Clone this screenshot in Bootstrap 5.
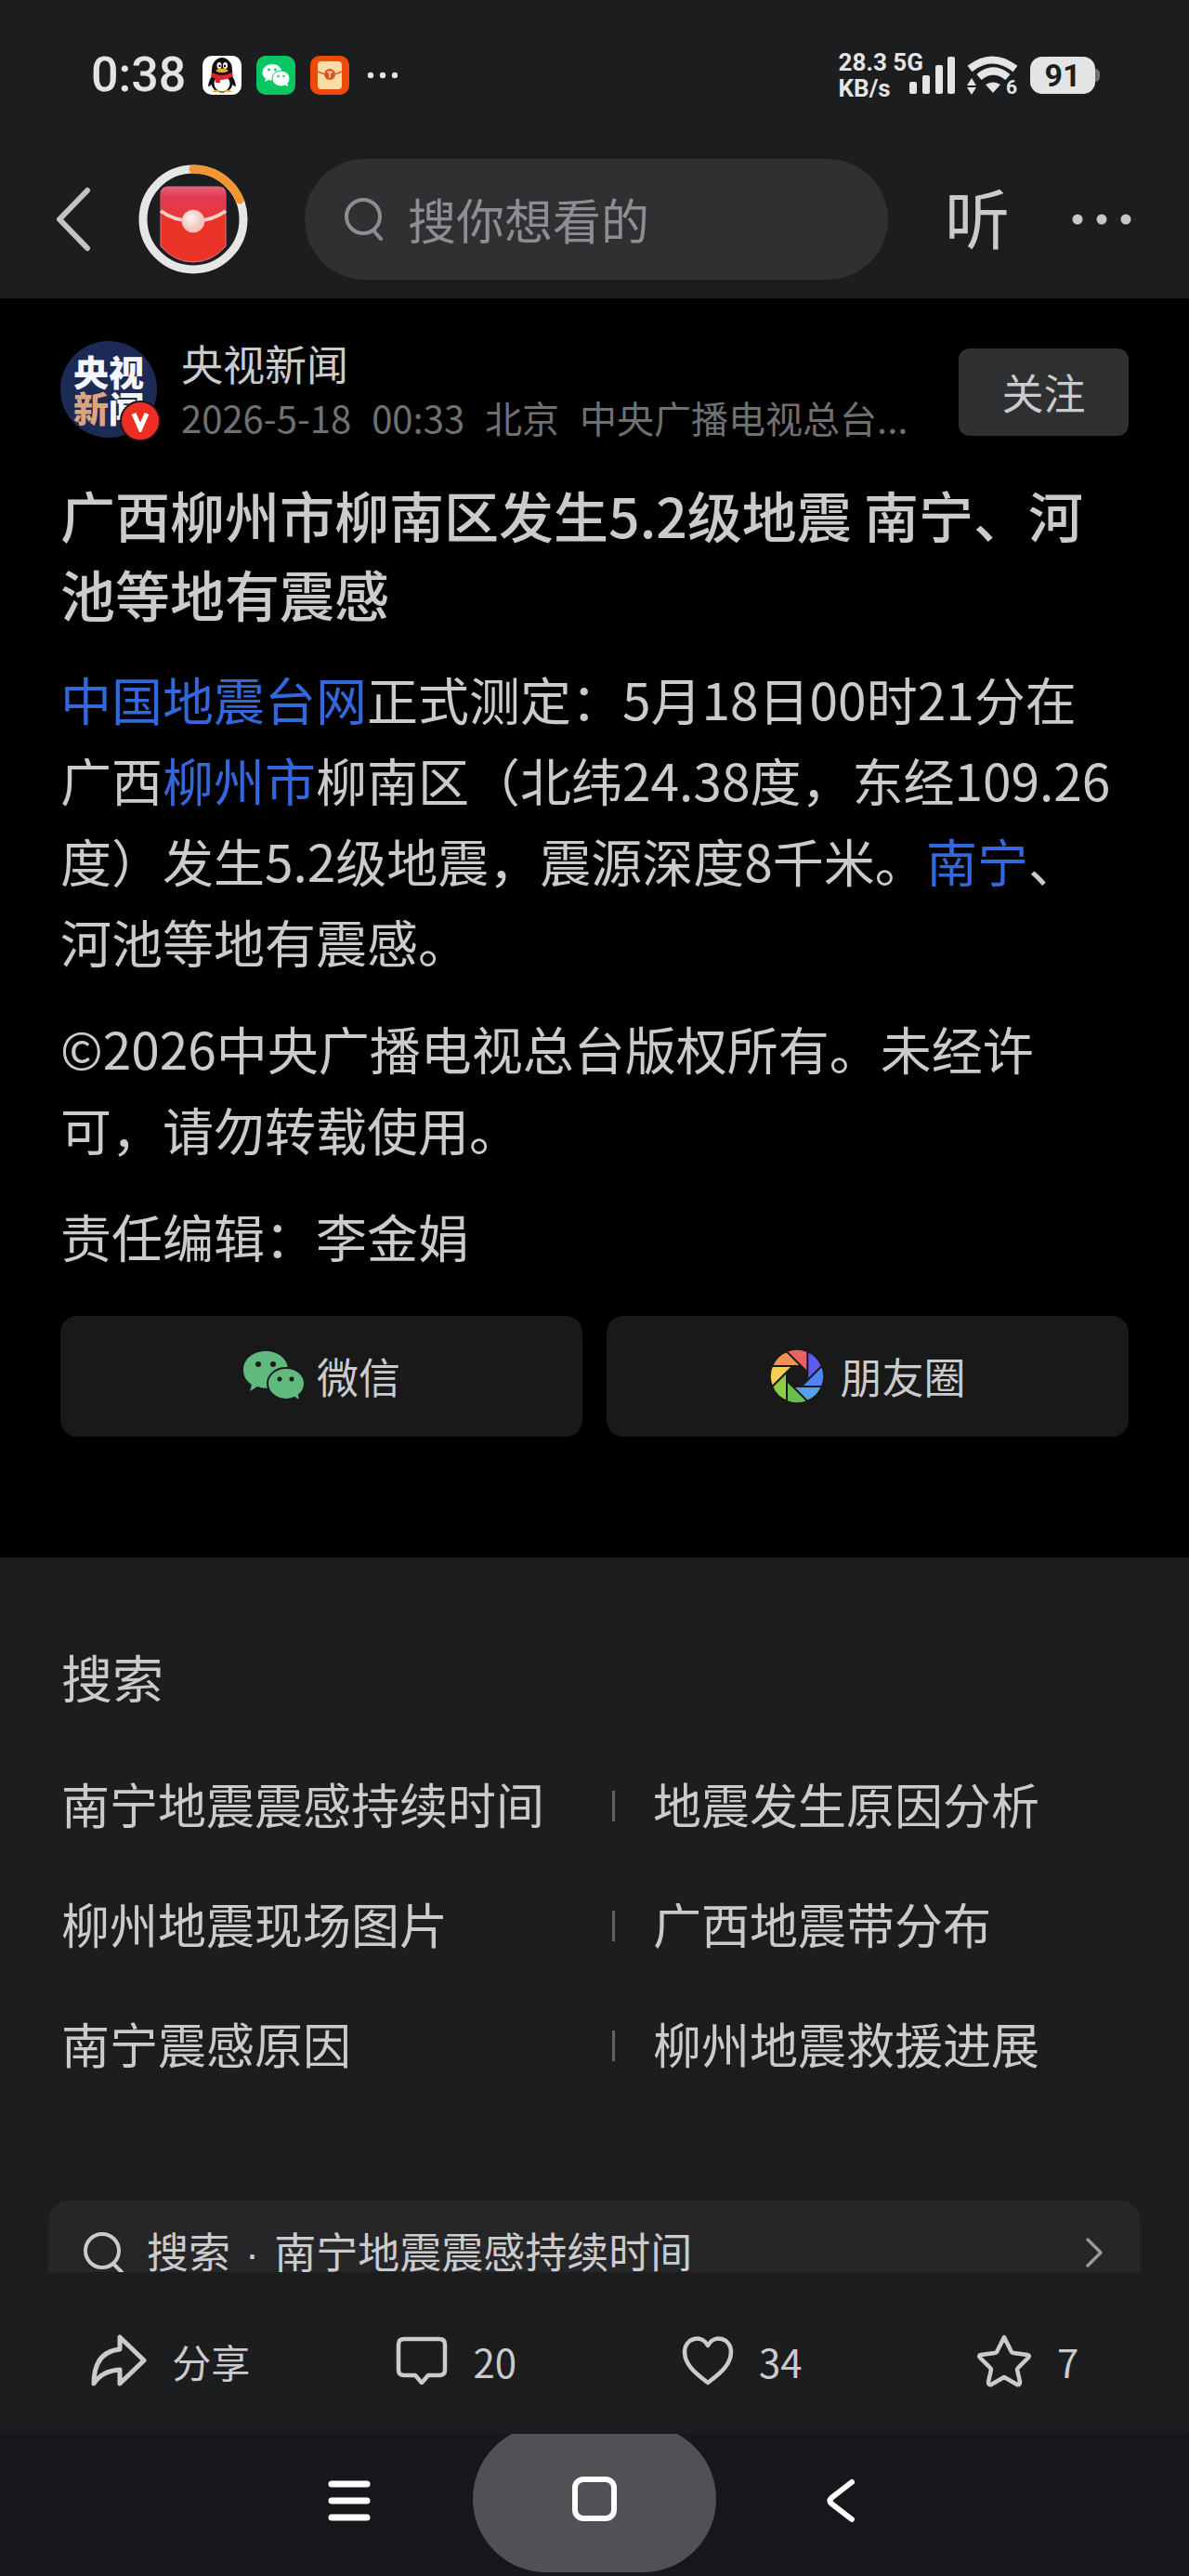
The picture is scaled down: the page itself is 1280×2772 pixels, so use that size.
<!DOCTYPE html>
<html lang="zh-CN">
<head>
<meta charset="utf-8">
<meta name="viewport" content="width=device-width, initial-scale=1">
<title>广西柳州市柳南区发生5.2级地震 南宁、河池等地有震感</title>
<link href="https://cdn.jsdelivr.net/npm/bootstrap@5.3.0/dist/css/bootstrap.min.css" rel="stylesheet">
<style>
:root{--ink:#cbcbcd;--panel:#1c1d1f;--raised:#2f3032;}
body{font-family:"Noto Sans CJK SC",sans-serif;color:var(--ink);background:var(--panel);height:100vh;line-height:1.5}
button{font-family:inherit;color:inherit}
svg{display:block;flex:none}
.bare{background:none;border:0;padding:0;color:inherit}
.statusbar{height:162px;padding:0 96px 0 98px;font-family:Roboto,sans-serif;font-weight:700;color:#e3e4e4}
.clock{font-size:52px;font-weight:500;width:120px}
.netrate{font-size:26px;line-height:28px}
.bars{margin-left:-15px}
.wifi{margin:0 13px 0 11px}
.batt{width:70px;height:40px;border-radius:13px;background:#e3e5e4;color:#1c1d1f;font-size:34px}
.batt-tip{width:5px;height:14px;background:#707172;border-radius:0 5px 5px 0}
.topnav{padding:9px 62px 20px 60px}
.packet{margin-left:51px}
.finder{height:130px;border-radius:65px;background:var(--raised);margin-left:61px;padding:0 43px;flex:1 1 0;min-width:0}
.finder input{font-size:52px;color:var(--ink);background:none;border:0;outline:0;min-width:0;padding:0}
.finder input::placeholder{color:#8d8e91;opacity:1}
.listen{font-size:70px;line-height:100px;margin:0 67px 0 61px;padding-bottom:6px}
.feed{min-height:0}
.article{background:#000;padding:46px 65px 130px}
.avatar{width:104px;height:104px;background:#1e2a56;font-size:38px;font-weight:900;line-height:39px;color:#f4f6fc;padding-top:12px}
.avatar em{font-style:normal;color:#d9a77f}
.vmark{right:-4px;bottom:-4px;width:44px;height:44px;border:2px solid #241216;background:#ee2d24}
.byline{margin-left:26px}
.author{font-size:45px;line-height:48px}
.meta{font-size:40px;line-height:56px;color:#6f7072;gap:22px;margin-top:6px}
.btn.follow{width:183px;height:94px;border-radius:12px;border:0;background:var(--raised);color:var(--ink);font-size:45px;line-height:60px}
.headline{font-size:59px;line-height:85px;font-weight:500;margin:34px 0 27px}
.story{font-size:55px;line-height:87px;padding-right:10px}
.story p{margin-bottom:28px}
.story a{color:#3268dc;text-decoration:none}
.sharebtn{height:130px;border-radius:18px;background:#19191a;font-size:45px;gap:12px}
.sharerow{margin-top:43px;gap:26px}
.related{padding:87px 52px 0}
.related h2{font-size:55px;line-height:80px;font-weight:400;margin:0 14px 33px}
.related ul{margin:0 14px 105px}
.related li{font-size:52px;line-height:129px}
.related li a{color:inherit;text-decoration:none}
.related li:nth-child(even) a::before{content:"";display:inline-block;width:3px;height:33px;background:#626365;margin:0 41px 0 19px;vertical-align:3px}
.more{height:120px;border-radius:22px;background:#262628;font-size:45px;padding:0 40px 8px 38px;color:inherit;text-decoration:none}
.more .dot{font-family:"Liberation Sans",sans-serif;margin:0 6px}
.actions{height:174px;padding:16px 20px 0 30px;background:var(--panel);font-size:42px}
.actions button{gap:27px}
.sysnav{height:153px;background:#16171b}
.sysnav .homekey{width:262px;height:158px;border-radius:79px;background:#505154;margin-bottom:4px}
.keys{gap:110px}
</style>
<script src="https://cdn.jsdelivr.net/npm/bootstrap@5.3.0/dist/js/bootstrap.bundle.min.js"></script>
</head>
<body class="d-flex flex-column overflow-hidden">
<header class="flex-shrink-0">
  <div class="statusbar d-flex align-items-center">
    <span class="clock">0:38</span>
    <div class="d-flex align-items-center gap-3">
      <svg width="42" height="42" viewBox="0 0 42 42"><rect width="42" height="42" rx="10" fill="#fff"/><path d="M11 21Q7 25 6 33q3 0 5-5zM31 21q4 4 5 12-3 0-5-5z" fill="#111"/><ellipse cx="21" cy="28" rx="12" ry="11.500" fill="#111"/><ellipse cx="21" cy="30" rx="8.500" ry="8.500" fill="#fff"/><path d="M10 15a11 13 0 0 1 22 0q1 6-2 8H12q-3-2-2-8" fill="#111"/><ellipse cx="18" cy="10.500" rx="2.500" ry="3.500" fill="#fff"/><ellipse cx="24.500" cy="10.500" rx="2.500" ry="3.500" fill="#fff"/><circle cx="18.500" cy="11" r="1.200"/><circle cx="24" cy="11" r="1.200"/><ellipse cx="21" cy="16" rx="6.500" ry="2.200" fill="#f3ac27"/><path d="M10 18q11 6 22 0l1 4q-7 4-14 4v3h-5v-4l-5-3z" fill="#e0222a"/><path d="M11 38q4-3 9 1H11zM22 39q5-4 9-1v1z" fill="#f3ac27"/></svg>
      <svg width="42" height="42" viewBox="0 0 42 42"><rect width="42" height="42" rx="10" fill="#09c664"/><path d="M17 9c-6 0-10.500 4-10.500 9 0 3 1.500 5 3.500 6.500L9 28l4-2q7 1.500 11-1.500 4-3 3.500-7Q26 9 17 9" fill="#fff"/><ellipse cx="26.500" cy="24.500" rx="9.500" ry="8.500" fill="#fff" stroke="#09c664" stroke-width="1"/><path d="m30 31 4 2-1-4z" fill="#fff"/><g fill="#09c664"><circle cx="13.500" cy="15" r="1.400"/><circle cx="20.500" cy="15" r="1.400"/><circle cx="23.500" cy="22" r="1.200"/><circle cx="29.500" cy="22" r="1.200"/></g></svg>
      <svg width="42" height="42" viewBox="0 0 42 42"><rect width="42" height="42" rx="10" fill="#f04a0b"/><rect x="8" y="6" width="26" height="30" rx="4" fill="#fbdca8"/><path d="M8 17q13 7 26 0" fill="none" stroke="#d8642c" stroke-width="1.500"/><circle cx="21" cy="20" r="6" fill="#d9551d"/><path d="M18 17.500h6M21 17.500v6" stroke="#fde4bd" stroke-width="1.500"/></svg>
      <svg width="36" height="8" viewBox="0 0 36 8" fill="#e3e4e4"><circle cx="7" cy="4" r="3.200"/><circle cx="20" cy="4" r="3.200"/><circle cx="33" cy="4" r="3.200"/></svg>
    </div>
    <div class="netrate ms-auto">28.3 5G<br>KB/s</div>
    <svg class="bars" width="50" height="40" viewBox="0 0 50 40" fill="#e3e4e4"><rect y="27" width="8" height="13" rx="2"/><rect x="14" y="20" width="8" height="20" rx="2"/><rect x="28" y="9" width="8" height="31" rx="2"/><rect x="41" width="8" height="40" rx="2"/></svg>
    <svg class="wifi" width="56" height="42" viewBox="0 0 56 42"><g fill="none" stroke="#e3e4e4" stroke-width="8"><path d="M4 14q24-19 49 0"/><path d="M14 23q15-13 31 0"/></g><path d="M21 31q8-5 16 0l-8 9z" fill="#e3e4e4"/><path d="m6 24 5 8H1zM6 42l5-8H1z" fill="#e3e4e4"/><text x="43" y="41" font-size="21" fill="#e3e4e4">6</text></svg>
    <span class="batt d-flex align-items-center justify-content-center">91</span><span class="batt-tip"></span>
  </div>
  <nav class="topnav d-flex align-items-center">
    <button class="bare" aria-label="返回"><svg width="38" height="70" viewBox="0 0 38 70"><path d="M34 4 4 35l30 31" fill="none" stroke="#c2c3c4" stroke-width="6" stroke-linecap="round" stroke-linejoin="round"/></svg></button>
    <button class="bare packet" aria-label="红包"><svg width="118" height="118" viewBox="0 0 118 118">
      <defs><linearGradient id="flap" x1="0" y1="0" x2="0" y2="1"><stop offset="0" stop-color="#e4647a"/><stop offset=".3" stop-color="#e33b52"/><stop offset="1" stop-color="#e8373c"/></linearGradient><radialGradient id="pearl" cx=".4" cy=".35"><stop offset="0" stop-color="#fff3ef"/><stop offset="1" stop-color="#f4c6bf"/></radialGradient></defs>
      <circle cx="59" cy="59" r="54" fill="none" stroke="#e6e6e6" stroke-width="9"/><path d="M59 5a54 54 0 0 1 50 33" fill="none" stroke="#f3962f" stroke-width="9" stroke-linecap="round"/>
      <path d="M24 32q0-8 8-8h54q8 0 8 8v56q-15 17-35 17T24 88z" fill="#e93427" stroke="#df7590" stroke-width="1"/><path d="M24 49V32q0-8 8-8h54q8 0 8 8v17q-14 11-35 11T24 49" fill="url(#flap)"/><path d="M24 50q15 11 35 11t35-11" fill="none" stroke="#f8d2cb" stroke-width="4"/><circle cx="59" cy="61" r="12" fill="url(#pearl)" stroke="#f5b6ad" stroke-width="1"/></svg></button>
    <label class="finder d-flex align-items-center">
      <svg class="me-4" width="44" height="48" viewBox="0 0 44 48" fill="none" stroke="#8d8e91" stroke-width="4"><circle cx="20" cy="21" r="18"/><path d="m31 36 8 9" stroke-linecap="round"/></svg>
      <input class="w-100" type="search" placeholder="搜你想看的" aria-label="搜索">
    </label>
    <button class="bare listen">听</button>
    <button class="bare" aria-label="更多"><svg width="64" height="12" viewBox="0 0 64 12" fill="#c6c7c8"><circle cx="6" cy="6" r="5.500"/><circle cx="32" cy="6" r="5.500"/><circle cx="58" cy="6" r="5.500"/></svg></button>
  </nav>
</header>

<main class="feed flex-fill overflow-hidden">
  <article class="article">
    <div class="d-flex align-items-start">
      <div class="avatar rounded-circle position-relative text-center flex-shrink-0">央视<br><em>新</em>闻
        <span class="vmark position-absolute rounded-circle d-flex align-items-center justify-content-center"><svg width="22" height="24" viewBox="0 0 22 24"><path d="m4 4 7 16 7-16" fill="none" stroke="#fff" stroke-width="5"/></svg></span>
      </div>
      <div class="byline flex-fill">
        <div class="author">央视新闻</div>
        <div class="meta d-flex text-nowrap"><time>2026-5-18</time><span>00:33</span><span>北京</span><span>中央广播电视总台...</span></div>
      </div>
      <button class="btn follow p-0 mt-2 flex-shrink-0">关注</button>
    </div>
    <h1 class="headline">广西柳州市柳南区发生5.2级地震 南宁、河池等地有震感</h1>
    <div class="story">
      <p><a href="#">中国地震台网</a>正式测定：5月18日00时21分在广西<a href="#">柳州市</a>柳南区（北纬24.38度，东经109.26度）发生5.2级地震，震源深度8千米。<a href="#">南宁</a>、河池等地有震感。</p>
      <p>©2026中央广播电视总台版权所有。未经许可，请勿转载使用。</p>
      <p class="mb-0">责任编辑：李金娟</p>
    </div>
    <div class="sharerow d-flex">
      <button class="bare sharebtn flex-fill w-50 d-flex align-items-center justify-content-center">
        <svg width="68" height="56" viewBox="0 0 68 56"><path d="M25 1C11 1 1 10 1 21c0 7 3 12 9 16l-2 7 8-5q5 2 11 2C40 41 49 33 49 21S38 1 25 1" fill="#60ba7d"/><path d="M47 19c-12 0-20 8-20 17s9 17 20 17q5 0 9-2l6 4-1-7q6-5 6-12c0-9-8-17-20-17" fill="#60ba7d" stroke="#19191a" stroke-width="2"/><g fill="#19191a"><circle cx="17" cy="15" r="3"/><circle cx="33" cy="15" r="3"/><circle cx="40" cy="31" r="2.500"/><circle cx="53" cy="31" r="2.500"/></g></svg>微信</button>
      <button class="bare sharebtn flex-fill w-50 d-flex align-items-center justify-content-center">
        <svg width="60" height="60" viewBox="-30 -30 60 60"><defs><path id="blade" d="M11-27A29 29 0 0 1 27-11L11 5z"/></defs><g stroke="#19191a" stroke-width="2"><use href="#blade" fill="#5f5af0"/><use href="#blade" fill="#4c86f2" transform="rotate(45)"/><use href="#blade" fill="#58a0ee" transform="rotate(90)"/><use href="#blade" fill="#69be4d" transform="rotate(135)"/><use href="#blade" fill="#91cb43" transform="rotate(180)"/><use href="#blade" fill="#f6cd55" transform="rotate(225)"/><use href="#blade" fill="#ef9254" transform="rotate(270)"/><use href="#blade" fill="#e9625f" transform="rotate(315)"/></g></svg><span class="ms-1">朋友圈</span></button>
    </div>
  </article>

  <section class="related">
    <h2>搜索</h2>
    <ul class="list-unstyled row gx-0">
      <li class="col-6"><a href="#">南宁地震震感持续时间</a></li><li class="col-6"><a href="#">地震发生原因分析</a></li>
      <li class="col-6"><a href="#">柳州地震现场图片</a></li><li class="col-6"><a href="#">广西地震带分布</a></li>
      <li class="col-6"><a href="#">南宁震感原因</a></li><li class="col-6"><a href="#">柳州地震救援进展</a></li>
    </ul>
    <a class="more d-flex align-items-center" href="#">
      <svg class="me-4" width="44" height="46" viewBox="0 0 44 46" fill="none" stroke="#cbcbcd" stroke-width="4"><circle cx="20" cy="21" r="18"/><path d="m32 35 9 9" stroke-linecap="round"/></svg>
      <span>搜索 <span class="dot">·</span> 南宁地震震感持续时间</span>
      <svg class="ms-auto" width="20" height="34" viewBox="0 0 20 34"><path d="m3 3 14 14L3 31" fill="none" stroke="#98999b" stroke-width="3.500" stroke-linecap="round" stroke-linejoin="round"/></svg>
    </a>
  </section>
</main>

<footer class="flex-shrink-0">
  <div class="actions d-flex">
    <button class="bare w-25 d-flex align-items-center justify-content-center"><svg width="60" height="56" viewBox="0 0 60 56"><path d="M31 3v13Q3 19 3 53q9-14 28-15v15l26-25z" fill="none" stroke="#cbcbcd" stroke-width="5" stroke-linejoin="round"/></svg>分享</button>
    <button class="bare w-25 d-flex align-items-center justify-content-center"><svg width="56" height="52" viewBox="0 0 56 52"><path d="M9 3h38q6 0 6 6v27q0 6-6 6H35l-7 8-7-8H9q-6 0-6-6V9q0-6 6-6z" fill="none" stroke="#cbcbcd" stroke-width="4.500" stroke-linejoin="round"/></svg>20</button>
    <button class="bare w-25 d-flex align-items-center justify-content-center"><svg width="56" height="54" viewBox="0 0 56 54"><path d="M28 51C18 43 3 33 3 18 3 3 21-2 28 11 35-2 53 3 53 18c0 15-15 25-25 33z" fill="none" stroke="#cbcbcd" stroke-width="4.500" stroke-linejoin="round"/></svg>34</button>
    <button class="bare w-25 d-flex align-items-center justify-content-center"><svg width="60" height="58" viewBox="0 0 60 58"><path d="m30 4 8 16q1 1 2 1l15 2q3 1 1 3L45 37q-1 1-1 2l3 13q0 4-3 3L30 47l-14 8q-3 1-3-3l3-13q0-1-1-2L4 26q-2-2 1-3l15-2q1 0 2-1l8-16z" fill="none" stroke="#cbcbcd" stroke-width="4.500" stroke-linejoin="round"/></svg>7</button>
  </div>
  <div class="sysnav overflow-hidden d-flex align-items-end justify-content-center">
    <div class="keys d-flex align-items-center">
      <button class="bare" aria-label="最近任务"><svg width="46" height="46" viewBox="0 0 46 46"><path d="M4 5h38M4 23h38M4 41h38" stroke="#fff" stroke-width="7" stroke-linecap="round"/></svg></button>
      <button class="bare homekey d-flex align-items-center justify-content-center" aria-label="主屏幕"><svg width="48" height="48" viewBox="0 0 48 48"><rect x="3" y="3" width="42" height="42" rx="9" fill="none" stroke="#fff" stroke-width="6"/></svg></button>
      <button class="bare" aria-label="返回上一页"><svg width="46" height="48" viewBox="0 0 46 48"><path d="M36 4 14 21q-3 3 0 6l22 17" fill="none" stroke="#fff" stroke-width="6" stroke-linecap="round"/></svg></button>
    </div>
  </div>
</footer>
</body>
</html>
